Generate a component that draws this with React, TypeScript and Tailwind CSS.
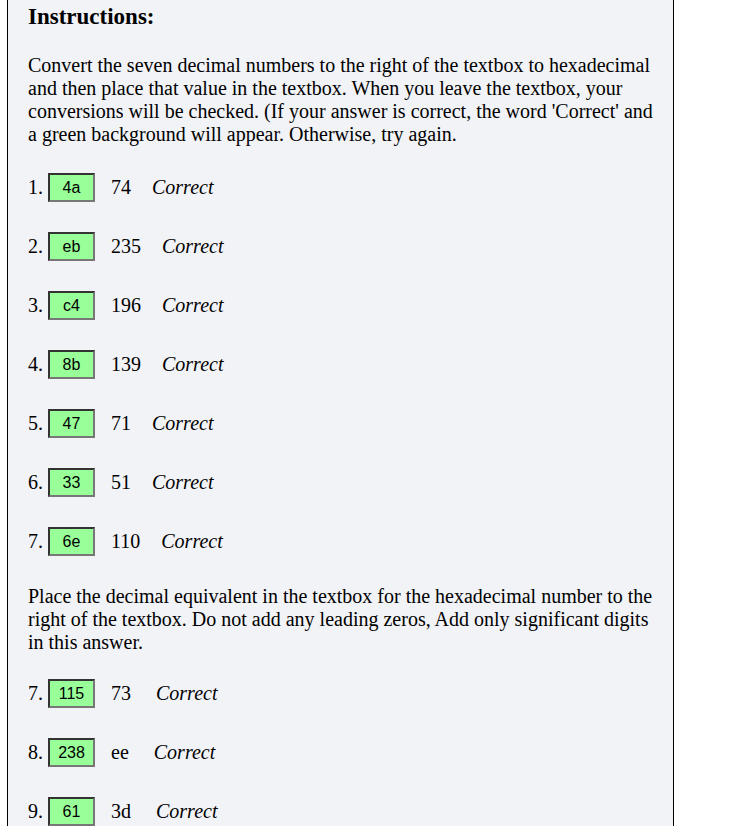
import React from "react";

type Row = { n: string; answer: string; given: string };

const hexRows: Row[] = [
  { n: "1.", answer: "4a", given: "74" },
  { n: "2.", answer: "eb", given: "235" },
  { n: "3.", answer: "c4", given: "196" },
  { n: "4.", answer: "8b", given: "139" },
  { n: "5.", answer: "47", given: "71" },
  { n: "6.", answer: "33", given: "51" },
  { n: "7.", answer: "6e", given: "110" },
];

const decRows: Row[] = [
  { n: "7.", answer: "115", given: "73" },
  { n: "8.", answer: "238", given: "ee" },
  { n: "9.", answer: "61", given: "3d" },
];

const AnswerRow = ({ row, wide }: { row: Row; wide?: boolean }) => {
  return (
    <div className="flex items-center h-[59px]">
      <span className="w-[20px]">{row.n}</span>
      <input
        readOnly
        defaultValue={row.answer}
        className="w-[47px] h-[29px] bg-[#99ff99] text-center text-[16px] text-black border-2 border-t-[#333] border-l-[#333] border-b-[#777] border-r-[#777] outline-none font-['Liberation_Sans',Arial,sans-serif]"
      />
      <span className="ml-[16px]">{row.given}</span>
      <span className={wide ? "ml-[25px] italic" : "ml-[21px] italic"}>Correct</span>
    </div>
  );
};

export default function App() {
  return (
    <div className="w-[740px] h-[826px] overflow-hidden bg-white font-['Liberation_Serif','Times_New_Roman',serif] text-black text-[20px] leading-[23px]">
      <div className="ml-[7px] w-[667px] min-h-[826px] border-x border-black bg-[#f2f3f7] pl-[20px] pr-[16px] pt-[4px]">
        <h3 className="font-bold text-[23px] leading-[26px]">Instructions:</h3>
        <p className="mt-[24px]">
          Convert the seven decimal numbers to the right of the textbox to hexadecimal and then
          place that value in the textbox. When you leave the textbox, your conversions will be
          checked. (If your answer is correct, the word 'Correct' and a green background will
          appear. Otherwise, try again.
        </p>
        <div className="mt-[12px] flex flex-col">
          {hexRows.map((r, i) => (
            <AnswerRow key={i} row={r} />
          ))}
        </div>
        <p className="mt-[14px]">
          Place the decimal equivalent in the textbox for the hexadecimal number to the right of
          the textbox. Do not add any leading zeros, Add only significant digits in this answer.
        </p>
        <div className="mt-[10px] flex flex-col">
          {decRows.map((r, i) => (
            <AnswerRow key={i} row={r} wide />
          ))}
        </div>
      </div>
    </div>
  );
}
